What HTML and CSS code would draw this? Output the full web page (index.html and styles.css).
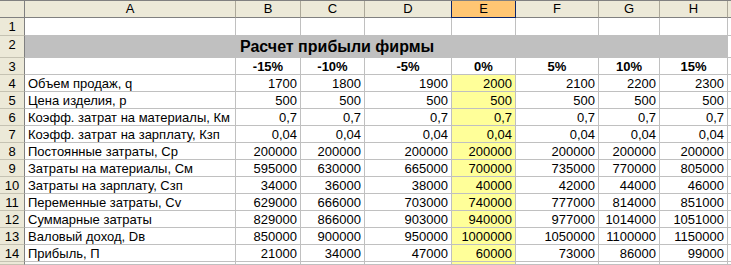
FILE: index.html
```html
<!DOCTYPE html>
<html lang="ru">
<head>
<meta charset="utf-8">
<link rel="stylesheet" href="styles.css">
</head>
<body>
<div class="sheet">
  <div class="ch corner"></div>
  <div class="ch">A</div>
  <div class="ch">B</div>
  <div class="ch">C</div>
  <div class="ch">D</div>
  <div class="ch sel">E</div>
  <div class="ch">F</div>
  <div class="ch">G</div>
  <div class="ch">H</div>
  <div class="ch last"></div>

  <div class="rh">1</div>
  <div class="c"></div><div class="c"></div><div class="c"></div><div class="c"></div><div class="c"></div><div class="c"></div><div class="c"></div><div class="c"></div><div class="c"></div>

  <div class="rh">2</div>
  <div class="c title-a"></div>
  <div class="c title">Расчет прибыли фирмы</div>
  <div class="c"></div>

  <div class="rh">3</div>
  <div class="c"></div>
  <div class="c pct">-15%</div>
  <div class="c pct">-10%</div>
  <div class="c pct">-5%</div>
  <div class="c pct">0%</div>
  <div class="c pct">5%</div>
  <div class="c pct">10%</div>
  <div class="c pct">15%</div>
  <div class="c"></div>

  <div class="rh">4</div>
  <div class="c lbl">Объем продаж, q</div>
  <div class="c n">1700</div><div class="c n">1800</div><div class="c n">1900</div><div class="c n hl">2000</div><div class="c n">2100</div><div class="c n">2200</div><div class="c n">2300</div><div class="c"></div>

  <div class="rh">5</div>
  <div class="c lbl">Цена изделия, p</div>
  <div class="c n">500</div><div class="c n">500</div><div class="c n">500</div><div class="c n hl">500</div><div class="c n">500</div><div class="c n">500</div><div class="c n">500</div><div class="c"></div>

  <div class="rh">6</div>
  <div class="c lbl">Коэфф. затрат на материалы, Км</div>
  <div class="c n">0,7</div><div class="c n">0,7</div><div class="c n">0,7</div><div class="c n hl">0,7</div><div class="c n">0,7</div><div class="c n">0,7</div><div class="c n">0,7</div><div class="c"></div>

  <div class="rh">7</div>
  <div class="c lbl">Коэфф. затрат на зарплату, Кзп</div>
  <div class="c n">0,04</div><div class="c n">0,04</div><div class="c n">0,04</div><div class="c n hl">0,04</div><div class="c n">0,04</div><div class="c n">0,04</div><div class="c n">0,04</div><div class="c"></div>

  <div class="rh">8</div>
  <div class="c lbl">Постоянные затраты, Cp</div>
  <div class="c n">200000</div><div class="c n">200000</div><div class="c n">200000</div><div class="c n hl">200000</div><div class="c n">200000</div><div class="c n">200000</div><div class="c n">200000</div><div class="c"></div>

  <div class="rh">9</div>
  <div class="c lbl">Затраты на материалы, Cм</div>
  <div class="c n">595000</div><div class="c n">630000</div><div class="c n">665000</div><div class="c n hl">700000</div><div class="c n">735000</div><div class="c n">770000</div><div class="c n">805000</div><div class="c"></div>

  <div class="rh">10</div>
  <div class="c lbl">Затраты на зарплату, Cзп</div>
  <div class="c n">34000</div><div class="c n">36000</div><div class="c n">38000</div><div class="c n hl">40000</div><div class="c n">42000</div><div class="c n">44000</div><div class="c n">46000</div><div class="c"></div>

  <div class="rh">11</div>
  <div class="c lbl">Переменные затраты, Cv</div>
  <div class="c n">629000</div><div class="c n">666000</div><div class="c n">703000</div><div class="c n hl">740000</div><div class="c n">777000</div><div class="c n">814000</div><div class="c n">851000</div><div class="c"></div>

  <div class="rh">12</div>
  <div class="c lbl">Суммарные затраты</div>
  <div class="c n">829000</div><div class="c n">866000</div><div class="c n">903000</div><div class="c n hl">940000</div><div class="c n">977000</div><div class="c n">1014000</div><div class="c n">1051000</div><div class="c"></div>

  <div class="rh">13</div>
  <div class="c lbl">Валовый доход, Dв</div>
  <div class="c n">850000</div><div class="c n">900000</div><div class="c n">950000</div><div class="c n hl">1000000</div><div class="c n">1050000</div><div class="c n">1100000</div><div class="c n">1150000</div><div class="c"></div>

  <div class="rh">14</div>
  <div class="c lbl">Прибыль, П</div>
  <div class="c n">21000</div><div class="c n">34000</div><div class="c n">47000</div><div class="c n hl">60000</div><div class="c n">73000</div><div class="c n">86000</div><div class="c n">99000</div><div class="c"></div>

  <div class="rh"></div>
  <div class="c"></div><div class="c"></div><div class="c"></div><div class="c"></div><div class="c hl"></div><div class="c"></div><div class="c"></div><div class="c"></div><div class="c"></div>
</div>
</body>
</html>
```
FILE: styles.css
```css
html, body {
  margin: 0;
  padding: 0;
  background: #ffffff;
}

.sheet {
  display: grid;
  grid-template-columns: 25px 211px 65px 64px 87px 64px 83px 61px 68px 1fr;
  grid-template-rows: 17px 18px 22px repeat(12, 17px);
  font-family: "Liberation Sans", Arial, sans-serif;
  font-size: 13px;
  color: #000;
  overflow: hidden;
  height: 265px;
  border-top: 1px solid #808080;
  box-sizing: border-box;
}

.sheet > div {
  box-sizing: border-box;
  white-space: nowrap;
  line-height: 15px;
  overflow: visible;
}

.ch {
  background: #ece9d8;
  border-right: 1px solid #aca899;
  border-bottom: 1px solid #808080;
  text-align: center;
  line-height: 15px;
}

.ch.corner {
  border-right: 1px solid #808080;
}

.ch.sel {
  background: #ffc673;
  border: 1px solid #0a246a;
  border-top: none;
  margin-left: -1px;
}

.ch.last {
  border-right: none;
}

.rh {
  background: #ece9d8;
  border-right: 1px solid #808080;
  border-bottom: 1px solid #c5c2b2;
  text-align: center;
  padding-top: 1px;
}

.c {
  border-right: 1px solid #c0c0c0;
  border-bottom: 1px solid #c0c0c0;
  padding: 1px 3px 0 3px;
}

.title-a {
  background: #c0c0c0;
  border-right: none;
}

.title {
  grid-column: 3 / 10;
  background: #c0c0c0;
  font-weight: bold;
  font-size: 16px;
  padding: 3px 4px 0 4px;
  line-height: 18px;
}

.pct {
  font-weight: bold;
  text-align: center;
}

.lbl {
  text-align: left;
}

.n {
  text-align: right;
}

.hl {
  background: #ffff99;
}
```
